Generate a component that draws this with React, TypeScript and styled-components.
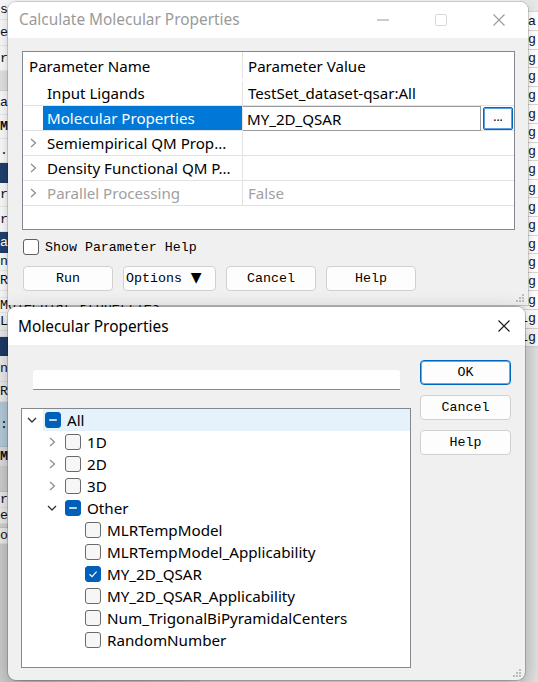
import React from 'react';
import styled, { createGlobalStyle } from 'styled-components';

const UI = `"Noto Sans", "Segoe UI", sans-serif`;
const MONO = `"Liberation Mono", "DejaVu Sans Mono", monospace`;

const Global = createGlobalStyle`
  html, body { margin: 0; padding: 0; }
  body { width: 538px; height: 682px; overflow: hidden; background: #d8d8d8; }
  * { box-sizing: border-box; }
`;

const Desktop = styled.div`
  position: relative;
  width: 538px;
  height: 682px;
  overflow: hidden;
  font-family: ${UI};
  background: #f3f3f3;
`;

/* ---------- background application (behind the dialogs) ---------- */
const BgApp = styled.div`
  display: grid;
  grid-template-columns: 200px 1fr 18px;
  height: 100%;
`;

const BgList = styled.div`
  display: flex;
  flex-direction: column;
  font-family: ${MONO};
  font-size: 13.3px;
  background: #f4f4f4;
`;

const BgRow = styled.div<{ $h: number; $bg: string; $fg: string; $bold?: boolean }>`
  height: ${(p) => p.$h}px;
  flex: none;
  display: flex;
  align-items: center;
  white-space: nowrap;
  overflow: hidden;
  background: ${(p) => p.$bg};
  color: ${(p) => p.$fg};
  font-weight: ${(p) => (p.$bold ? 700 : 400)};
  border-bottom: 1px solid rgba(0, 0, 0, 0.06);
`;

const BgFill = styled.div`
  flex: 1;
  background: linear-gradient(90deg, #d2d2d2, #e2e2e2);
`;

const BgMiddle = styled.div`
  background: #f3f3f3;
`;

const BgGrid = styled.div`
  display: flex;
  flex-direction: column;
  font-family: ${MONO};
  font-size: 13.3px;
  background: #e4e4e4;
`;

const GridCell = styled.div<{ $h: number; $bg?: string }>`
  height: ${(p) => p.$h}px;
  flex: none;
  display: flex;
  align-items: center;
  white-space: pre;
  overflow: hidden;
  background: ${(p) => p.$bg ?? '#ffffff'};
  border-bottom: 1px solid #d6d6d6;
  color: #111;
`;

/* ---------- generic window chrome ---------- */
const Window = styled.div<{ $left: number; $top: number; $w: number; $h: number; $active?: boolean; $radius: string }>`
  position: absolute;
  left: ${(p) => p.$left}px;
  top: ${(p) => p.$top}px;
  width: ${(p) => p.$w}px;
  height: ${(p) => p.$h}px;
  background: #f0f0f0;
  border-radius: ${(p) => p.$radius};
  overflow: hidden;
  display: flex;
  flex-direction: column;
  box-shadow: ${(p) =>
    p.$active
      ? '0 0 0 1px rgba(0,0,0,0.18), 0 8px 22px rgba(0,0,0,0.32)'
      : '0 0 0 1px rgba(0,0,0,0.14), 0 3px 10px rgba(0,0,0,0.18)'};
`;

const TitleBar = styled.div<{ $h: number }>`
  height: ${(p) => p.$h}px;
  flex: none;
  background: #ffffff;
  display: flex;
  align-items: center;
`;

const Title = styled.div<{ $active?: boolean; $pad: number }>`
  flex: 1;
  padding-left: ${(p) => p.$pad}px;
  padding-bottom: ${(p) => (p.$active ? 0 : 1)}px;
  font-size: 15.4px;
  color: ${(p) => (p.$active ? '#000000' : '#9a9a9a')};
  white-space: nowrap;
`;

const CaptionBtn = styled.div<{ $w: number }>`
  width: ${(p) => p.$w}px;
  height: 100%;
  display: flex;
  align-items: center;
  justify-content: center;
`;

const Grip = styled.svg`
  position: absolute;
  right: 3px;
  bottom: 2px;
`;

const ResizeGrip = () => (
  <Grip width="10" height="10" viewBox="0 0 10 10">
    {[
      [7, 1],
      [4, 4],
      [7, 4],
      [1, 7],
      [4, 7],
      [7, 7],
    ].map(([x, y]) => (
      <rect key={`${x}-${y}`} x={x} y={y} width="2" height="2" fill="#bdbdbd" />
    ))}
  </Grip>
);

/* ---------- Calculate Molecular Properties window ---------- */
const Body1 = styled.div`
  flex: 1;
  padding: 13px 13px 0 14px;
  display: flex;
  flex-direction: column;
`;

const Table = styled.div`
  width: 493px;
  height: 179px;
  border: 1px solid #828790;
  background: #ffffff;
  display: flex;
  flex-direction: column;
  font-size: 15.1px;
  color: #000;
`;

const HeaderRow = styled.div`
  height: 29px;
  flex: none;
  display: flex;
  padding-bottom: 2px;
`;

const Row = styled.div`
  height: 25px;
  flex: none;
  display: flex;
  border-bottom: 1px solid #e2e2e2;
`;

const NameCell = styled.div`
  width: 220px;
  flex: none;
  display: flex;
  border-right: 1px solid #e2e2e2;
`;

const HeadText = styled.div<{ $pad: number }>`
  display: flex;
  align-items: center;
  padding-left: ${(p) => p.$pad}px;
  white-space: nowrap;
`;

const Indent = styled.div`
  width: 20px;
  flex: none;
  display: flex;
  align-items: center;
  padding-left: 5px;
`;

const NameLabel = styled.div<{ $selected?: boolean; $disabled?: boolean }>`
  flex: 1;
  display: flex;
  align-items: center;
  padding-left: 4px;
  white-space: nowrap;
  overflow: hidden;
  background: ${(p) => (p.$selected ? '#0078d7' : 'transparent')};
  color: ${(p) => (p.$selected ? '#ffffff' : p.$disabled ? '#a0a0a0' : '#000000')};
`;

const ValueCell = styled.div<{ $disabled?: boolean }>`
  flex: 1;
  display: flex;
  align-items: center;
  padding-left: 5px;
  white-space: nowrap;
  color: ${(p) => (p.$disabled ? '#a0a0a0' : '#000000')};
`;

const EditorCell = styled.div`
  flex: 1;
  display: flex;
  align-items: stretch;
  margin-bottom: -1px;
`;

const Editor = styled.div`
  flex: 1;
  display: flex;
  align-items: center;
  padding-left: 4px;
  border: 1px solid #9a9a9a;
  border-left: none;
  background: #fff;
`;

const DotsBtn = styled.div`
  width: 30px;
  margin: 1px 1px 1px 2px;
  border: 1px solid #0067c0;
  box-shadow: inset 0 0 0 1px #5aa2e2;
  border-radius: 2px;
  background: #fdfdfd;
  display: flex;
  align-items: center;
  justify-content: center;
  font-size: 12px;
  padding-bottom: 4px;
`;

const CheckRow = styled.label`
  margin-top: 8px;
  height: 18px;
  display: flex;
  align-items: center;
  gap: 6px;
  padding-left: 1px;
  font-family: ${MONO};
  font-size: 13.3px;
  color: #000;
`;

const PlainBox = styled.span`
  width: 16px;
  height: 16px;
  border: 1px solid #5f5f5f;
  border-radius: 3px;
  background: #fff;
`;

const ButtonRow = styled.div`
  margin-top: 10px;
  display: flex;
  gap: 10px;
  padding-left: 1px;
`;

const PushButton = styled.div<{ $w: number; $primary?: boolean }>`
  width: ${(p) => p.$w}px;
  height: 25px;
  border: 1px solid ${(p) => (p.$primary ? '#0067c0' : '#d0d0d0')};
  box-shadow: ${(p) => (p.$primary ? 'inset 0 0 0 1px #6aa9e0' : 'none')};
  border-radius: 4px;
  background: #fdfdfd;
  display: flex;
  align-items: center;
  justify-content: center;
  font-family: ${MONO};
  font-size: 13.3px;
  color: #000;
  white-space: nowrap;
`;

const OptionsBtn = styled(PushButton)`
  justify-content: flex-start;
  padding-left: 2px;
  gap: 9px;
`;

const Triangle = styled.span`
  font-family: "DejaVu Sans", sans-serif;
  font-size: 14px;
  line-height: 1;
  margin-top: -3px;
`;

/* ---------- Molecular Properties window ---------- */
const Body2 = styled.div`
  flex: 1;
  display: flex;
  padding: 0 14px 0 13px;
`;

const LeftCol = styled.div`
  width: 390px;
  display: flex;
  flex-direction: column;
`;

const Search = styled.div`
  margin: 25px 0 0 12px;
  width: 367px;
  height: 20px;
  background: #fff;
  border-radius: 3px 3px 0 0;
  border-bottom: 1px solid #8a8a8a;
`;

const Tree = styled.div`
  margin-top: 18px;
  height: 260px;
  border: 1px solid #828790;
  background: #fff;
  display: flex;
  flex-direction: column;
  font-size: 15.2px;
  color: #000;
`;

const TreeRow = styled.div<{ $level: number }>`
  height: 22px;
  flex: none;
  display: flex;
  align-items: center;
  padding-left: ${(p) => p.$level * 20}px;
`;

const Expander = styled.div`
  width: 21px;
  flex: none;
  display: flex;
  align-items: center;
  padding-left: 5px;
`;

const ItemArea = styled.div<{ $selected?: boolean }>`
  flex: 1;
  height: 100%;
  display: flex;
  align-items: center;
  gap: 6px;
  padding-left: 2px;
  background: ${(p) => (p.$selected ? '#e5f1fb' : 'transparent')};
  white-space: nowrap;
`;

const Box = styled.span<{ $on?: boolean }>`
  width: 16px;
  height: 16px;
  flex: none;
  border-radius: 3px;
  border: 1px solid ${(p) => (p.$on ? '#005fb8' : '#6a6a6a')};
  background: ${(p) => (p.$on ? '#005fb8' : '#f6f6f6')};
  display: flex;
  align-items: center;
  justify-content: center;
`;

const RightCol = styled.div`
  margin-left: 9px;
  padding-top: 15px;
  display: flex;
  flex-direction: column;
  gap: 10px;
`;

/* ---------- small drawings ---------- */
const ChevronRight = ({ color = '#8a8a8a' }: { color?: string }) => (
  <svg width="10" height="10" viewBox="0 0 10 10">
    <path d="M3 1 L7.5 5 L3 9" fill="none" stroke={color} strokeWidth="1.2" />
  </svg>
);

const ChevronDown = () => (
  <svg width="10" height="10" viewBox="0 0 10 10">
    <path d="M1 3 L5 7 L9 3" fill="none" stroke="#333" strokeWidth="1.3" />
  </svg>
);

const CloseGlyph = ({ color }: { color: string }) => (
  <svg width="12" height="12" viewBox="0 0 12 12">
    <path d="M0.5 0.5 L11.5 11.5 M11.5 0.5 L0.5 11.5" stroke={color} strokeWidth="1.1" />
  </svg>
);

type State = 'none' | 'checked' | 'partial';

const Check = ({ state }: { state: State }) => (
  <Box $on={state !== 'none'}>
    {state === 'checked' && (
      <svg width="10" height="10" viewBox="0 0 10 10">
        <path d="M1.5 5.2 L4 7.6 L8.6 2.6" fill="none" stroke="#fff" strokeWidth="1.2" />
      </svg>
    )}
    {state === 'partial' && (
      <svg width="10" height="10" viewBox="0 0 10 10">
        <rect x="1" y="4.3" width="8" height="1.5" rx="0.7" fill="#fff" />
      </svg>
    )}
  </Box>
);

/* ---------- data ---------- */
const leftRows: { h: number; t: string; bg?: string; fg?: string; bold?: boolean }[] = [
  { h: 20, t: 'su' },
  { h: 26, t: 'en' },
  { h: 25, t: 'ri' },
  { h: 20, t: '', bg: '#dcdcdc' },
  { h: 24, t: 'a' },
  { h: 24, t: 'M', bold: true },
  { h: 24, t: '.l' },
  { h: 20, t: '', bg: '#1f3e6b' },
  { h: 24, t: 'ri' },
  { h: 25, t: 're' },
  { h: 21, t: 'a', bg: '#1f3e6b', fg: '#fff' },
  { h: 18, t: 'n' },
  { h: 20, t: 'RM' },
  { h: 7, t: '' },
  { h: 15, t: 'Molecular Properties' },
  { h: 18, t: 'Li' },
  { h: 6, t: '' },
  { h: 19, t: '', bg: '#1f3e6b' },
  { h: 26, t: 'n' },
  { h: 20, t: 'RO' },
  { h: 45, t: ':', bg: '#bcd3e3' },
  { h: 20, t: 'M', bold: true, bg: '#e4e4e4' },
  { h: 25, t: '', bg: '#d6d6d6' },
  { h: 16, t: 'ri' },
  { h: 16, t: 'et' },
  { h: 4, t: '', bg: '#dadada' },
  { h: 16, t: 'ow' },
];

const gridRows: { h: number; t: string; bg?: string }[] = [
  { h: 12, t: '', bg: '#e6e6e6' },
  { h: 19, t: ' a' },
  ...Array.from({ length: 17 }, () => ({ h: 18.6, t: 'ig' })),
];

const params = [
  { name: 'Input Ligands', value: 'TestSet_dataset-qsar:All' },
  { name: 'Molecular Properties', value: 'MY_2D_QSAR', selected: true },
  { name: 'Semiempirical QM Prop...', value: '', expander: true },
  { name: 'Density Functional QM P...', value: '', expander: true },
  { name: 'Parallel Processing', value: 'False', expander: true, disabled: true },
];

type Node = { label: string; level: number; state: State; exp?: 'open' | 'closed'; selected?: boolean };
const tree: Node[] = [
  { label: 'All', level: 0, state: 'partial', exp: 'open', selected: true },
  { label: '1D', level: 1, state: 'none', exp: 'closed' },
  { label: '2D', level: 1, state: 'none', exp: 'closed' },
  { label: '3D', level: 1, state: 'none', exp: 'closed' },
  { label: 'Other', level: 1, state: 'partial', exp: 'open' },
  { label: 'MLRTempModel', level: 2, state: 'none' },
  { label: 'MLRTempModel_Applicability', level: 2, state: 'none' },
  { label: 'MY_2D_QSAR', level: 2, state: 'checked' },
  { label: 'MY_2D_QSAR_Applicability', level: 2, state: 'none' },
  { label: 'Num_TrigonalBiPyramidalCenters', level: 2, state: 'none' },
  { label: 'RandomNumber', level: 2, state: 'none' },
];

export default function App() {
  return (
    <>
      <Global />
      <Desktop>
        <BgApp>
          <BgList>
            {leftRows.map((r, i) => (
              <BgRow key={i} $h={r.h} $bg={r.bg ?? '#f4f4f4'} $fg={r.fg ?? '#111'} $bold={r.bold}>
                {r.t}
              </BgRow>
            ))}
            <BgFill />
          </BgList>
          <BgMiddle />
          <BgGrid>
            {gridRows.map((r, i) => (
              <GridCell key={i} $h={r.h} $bg={r.bg}>
                {r.t}
              </GridCell>
            ))}
          </BgGrid>
        </BgApp>

        {/* Calculate Molecular Properties (inactive) */}
        <Window $left={8} $top={2} $w={520} $h={303} $radius="8px 8px 0 0">
          <TitleBar $h={36}>
            <Title $pad={11}>Calculate Molecular Properties</Title>
            <CaptionBtn $w={58}>
              <svg width="12" height="2" viewBox="0 0 12 2">
                <rect x="0" y="0.5" width="12" height="1" fill="#9a9a9a" />
              </svg>
            </CaptionBtn>
            <CaptionBtn $w={58}>
              <svg width="12" height="12" viewBox="0 0 12 12">
                <rect x="0.5" y="0.5" width="11" height="11" rx="1.5" fill="none" stroke="#d8d8d8" />
              </svg>
            </CaptionBtn>
            <CaptionBtn $w={58}>
              <CloseGlyph color="#9a9a9a" />
            </CaptionBtn>
          </TitleBar>
          <Body1>
            <Table>
              <HeaderRow>
                <NameCell>
                  <HeadText $pad={6}>Parameter Name</HeadText>
                </NameCell>
                <HeadText $pad={5}>Parameter Value</HeadText>
              </HeaderRow>
              {params.map((p) => (
                <Row key={p.name}>
                  <NameCell>
                    <Indent>{p.expander && <ChevronRight />}</Indent>
                    <NameLabel $selected={p.selected} $disabled={p.disabled}>
                      {p.name}
                    </NameLabel>
                  </NameCell>
                  {p.selected ? (
                    <EditorCell>
                      <Editor>{p.value}</Editor>
                      <DotsBtn>...</DotsBtn>
                    </EditorCell>
                  ) : (
                    <ValueCell $disabled={p.disabled}>{p.value}</ValueCell>
                  )}
                </Row>
              ))}
            </Table>
            <CheckRow>
              <PlainBox />
              Show Parameter Help
            </CheckRow>
            <ButtonRow>
              <PushButton $w={90}>Run</PushButton>
              <OptionsBtn $w={93}>
                Options
                <Triangle>▼</Triangle>
              </OptionsBtn>
              <PushButton $w={90}>Cancel</PushButton>
              <PushButton $w={90}>Help</PushButton>
            </ButtonRow>
          </Body1>
          <ResizeGrip />
        </Window>

        {/* Molecular Properties (active) */}
        <Window $left={8} $top={307} $w={517} $h={373} $active $radius="8px">
          <TitleBar $h={38}>
            <Title $active $pad={10}>
              Molecular Properties
            </Title>
            <CaptionBtn $w={42}>
              <CloseGlyph color="#1a1a1a" />
            </CaptionBtn>
          </TitleBar>
          <Body2>
            <LeftCol>
              <Search />
              <Tree>
                {tree.map((n) => (
                  <TreeRow key={n.label} $level={n.level}>
                    {n.level < 2 && (
                      <Expander>
                        {n.exp === 'open' ? <ChevronDown /> : <ChevronRight />}
                      </Expander>
                    )}
                    {n.level === 2 && <Expander />}
                    <ItemArea $selected={n.selected}>
                      <Check state={n.state} />
                      {n.label}
                    </ItemArea>
                  </TreeRow>
                ))}
              </Tree>
            </LeftCol>
            <RightCol>
              <PushButton $w={91} $primary>
                OK
              </PushButton>
              <PushButton $w={91}>Cancel</PushButton>
              <PushButton $w={91}>Help</PushButton>
            </RightCol>
          </Body2>
          <ResizeGrip />
        </Window>
      </Desktop>
    </>
  );
}
